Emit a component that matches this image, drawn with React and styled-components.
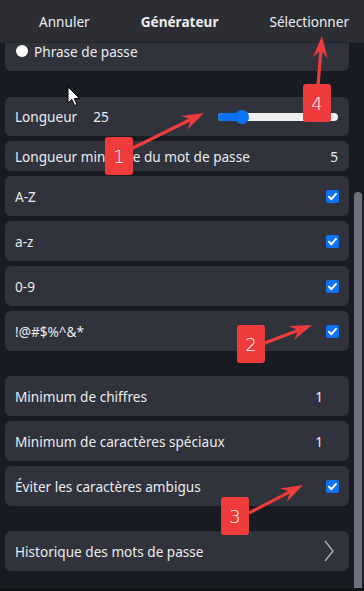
import React from "react";
import styled, { createGlobalStyle } from "styled-components";

const GlobalStyle = createGlobalStyle`
  html, body { margin: 0; padding: 0; background: #181b22; }
  body { font-family: "Noto Sans", "Open Sans", sans-serif; color: #e9eaec; }
  * { box-sizing: border-box; }
`;

const Frame = styled.div`
  position: relative;
  width: 364px;
  height: 591px;
  overflow: hidden;
  background: #181b22;
  display: flex;
  flex-direction: column;
`;

const Header = styled.header`
  height: 43px;
  flex: none;
  display: flex;
  align-items: center;
  gap: 51px;
  padding: 0 0 0 39px;
  background: #2c2e34;
  border-bottom: 1px solid #24262b;
  font-size: 13.6px;
  z-index: 1;
`;

const HeaderItem = styled.span`
  font-weight: ${(p) => (p.$bold ? 700 : 400)};
  color: #eceef1;
  white-space: nowrap;
`;

const Body = styled.div`
  flex: 1;
  display: flex;
  overflow: hidden;
`;

const Content = styled.div`
  width: 349px;
  padding-left: 5px;
  margin-top: -12px;
  display: flex;
  flex-direction: column;
  gap: 26px;
`;

const Group = styled.div`
  display: flex;
  flex-direction: column;
  gap: 5px;
`;

const SectionGap = styled.div`
  height: ${(p) => p.$h}px;
`;

const Card = styled.div`
  height: ${(p) => p.$h || 40}px;
  display: flex;
  align-items: center;
  padding: 0 ${(p) => p.$pr ?? 10}px 0 ${(p) => p.$pl ?? 10}px;
  background: #30333b;
  border-radius: 6px;
  font-size: 13.6px;
  color: #eaebee;
  white-space: nowrap;
`;

const Label = styled.span`
  flex: ${(p) => (p.$grow ? 1 : "none")};
`;

const Value = styled.span`
  margin-left: ${(p) => p.$ml || 0}px;
`;

const Radio = styled.span`
  width: 12px;
  height: 12px;
  border-radius: 50%;
  background: #ffffff;
  margin-right: 6px;
  flex: none;
`;

const SliderWrap = styled.div`
  position: relative;
  margin-left: auto;
  margin-right: 1px;
  width: 120px;
  height: 8px;
  border-radius: 4px;
  background: #efefef;
`;

const SliderFill = styled.div`
  height: 100%;
  border-radius: 4px;
  background: #0c72f5;
`;

const SliderThumb = styled.div`
  position: absolute;
  top: 50%;
  width: 14px;
  height: 14px;
  margin: -7px 0 0 -7px;
  border-radius: 50%;
  background: #0c72f5;
`;

const Scroll = styled.div`
  width: 15px;
  padding: 149px 2px 0 5px;
`;

const Thumb = styled.div`
  height: 420px;
  border-radius: 4px;
  background: #6a717f;
`;

const Overlay = styled.div`
  position: absolute;
  inset: 0;
  pointer-events: none;
  z-index: 5;
`;

const Badge = styled.div`
  position: absolute;
  left: ${(p) => p.$x}px;
  top: ${(p) => p.$y}px;
  width: 28px;
  height: 38px;
  border-radius: 3px;
  background: #ee3b3b;
  color: #ffffff;
  font-family: "DejaVu Sans", sans-serif;
  font-weight: 200;
  font-size: 18px;
  display: flex;
  align-items: center;
  justify-content: center;
`;

const OverlaySvg = styled.svg`
  position: absolute;
  inset: 0;
`;

const BottomEdge = styled.div`
  position: absolute;
  left: 0;
  right: 0;
  bottom: 0;
  height: 3px;
  background: #121418;
  z-index: 2;
`;

function Check() {
  return (
    <svg width="13" height="13" viewBox="0 0 13 13" style={{ flex: "none" }}>
      <rect x="0" y="0" width="13" height="13" rx="2" fill="#0b72f3" />
      <path d="M3 6.8 L5.4 9.2 L10 3.9" fill="none" stroke="#fff" strokeWidth="2" strokeLinecap="round" strokeLinejoin="round" />
    </svg>
  );
}

function Chevron() {
  return (
    <svg width="10" height="22" viewBox="0 0 10 22" style={{ flex: "none" }}>
      <path d="M1 1 L9 11 L1 21" fill="none" stroke="#aeb6c4" strokeWidth="1.3" />
    </svg>
  );
}

function arrowPoints(x1, y1, x2, y2) {
  const dx = x2 - x1, dy = y2 - y1;
  const len = Math.hypot(dx, dy);
  const ux = dx / len, uy = dy / len;
  const nx = -uy, ny = ux;
  const head = 22, notch = 16, hw = 7.5, sw = 1.6;
  const bx = x2 - ux * head, by = y2 - uy * head;
  const kx = x2 - ux * notch, ky = y2 - uy * notch;
  const p = [
    [x1 + nx * sw, y1 + ny * sw],
    [kx + nx * sw, ky + ny * sw],
    [bx + nx * hw, by + ny * hw],
    [x2, y2],
    [bx - nx * hw, by - ny * hw],
    [kx - nx * sw, ky - ny * sw],
    [x1 - nx * sw, y1 - ny * sw],
  ];
  return p.map((q) => q.map((v) => v.toFixed(1)).join(",")).join(" ");
}

const arrows = [
  [133, 148, 204, 113],
  [318, 86, 322, 36],
  [265, 343, 312, 325],
  [249, 513, 303, 485],
];

export default function App() {
  return (
    <>
      <GlobalStyle />
      <Frame>
        <Header>
          <HeaderItem>Annuler</HeaderItem>
          <HeaderItem $bold>Générateur</HeaderItem>
          <HeaderItem>Sélectionner</HeaderItem>
        </Header>
        <Body>
          <Content>
            <Group>
              <Card $pl={11}>
                <Radio />
                <Label>Phrase de passe</Label>
              </Card>
            </Group>
            <div>
              <Group>
                <Card $h={39}>
                  <Label>Longueur</Label>
                  <Value $ml={16}>25</Value>
                  <SliderWrap>
                    <SliderFill style={{ width: `${(24 / 120) * 100}%` }} />
                    <SliderThumb style={{ left: `${(24 / 120) * 100}%` }} />
                  </SliderWrap>
                </Card>
                <Card $h={30} $pr={11}>
                  <Label $grow>Longueur minimale du mot de passe</Label>
                  <Value>5</Value>
                </Card>
                <Card>
                  <Label $grow>A-Z</Label>
                  <Check />
                </Card>
                <Card>
                  <Label $grow>a-z</Label>
                  <Check />
                </Card>
                <Card>
                  <Label $grow>0-9</Label>
                  <Check />
                </Card>
                <Card>
                  <Label $grow>!@#$%^&amp;*</Label>
                  <Check />
                </Card>
              </Group>
              <SectionGap $h={25} />
              <Group>
                <Card $pr={26}>
                  <Label $grow>Minimum de chiffres</Label>
                  <Value>1</Value>
                </Card>
                <Card $pr={26}>
                  <Label $grow>Minimum de caractères spéciaux</Label>
                  <Value>1</Value>
                </Card>
                <Card>
                  <Label $grow>Éviter les caractères ambigus</Label>
                  <Check />
                </Card>
              </Group>
              <SectionGap $h={25} />
              <Group>
                <Card $pr={15}>
                  <Label $grow>Historique des mots de passe</Label>
                  <Chevron />
                </Card>
              </Group>
            </div>
          </Content>
          <Scroll>
            <Thumb />
          </Scroll>
        </Body>
        <BottomEdge />
        <Overlay>
          <OverlaySvg width="364" height="591" viewBox="0 0 364 591">
            {arrows.map((a, i) => (
              <polygon key={i} points={arrowPoints(...a)} fill="#ee3b3b" />
            ))}
            <path
              d="M68 87 L68 103 L71.8 99.4 L74.6 105.6 L77 104.6 L74.3 98.6 L79.4 98.4 Z"
              fill="#ffffff"
              stroke="#000000"
              strokeWidth="1"
              strokeLinejoin="round"
            />
          </OverlaySvg>
          <Badge $x={105} $y={137}>1</Badge>
          <Badge $x={237} $y={325}>2</Badge>
          <Badge $x={221} $y={497}>3</Badge>
          <Badge $x={303} $y={84}>4</Badge>
        </Overlay>
      </Frame>
    </>
  );
}
